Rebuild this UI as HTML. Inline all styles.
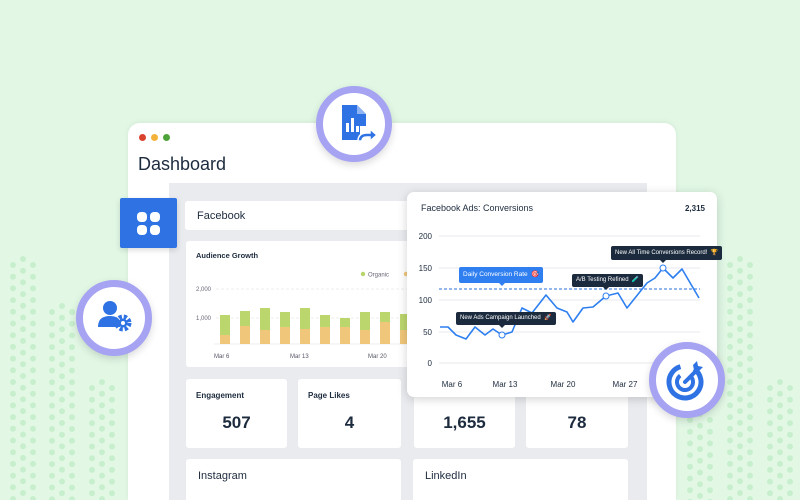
<!DOCTYPE html>
<html style="width:800px;height:500px;overflow:hidden"><head><meta charset="utf-8"><style>
*{margin:0;padding:0;box-sizing:border-box}
body{width:800px;height:500px;overflow:hidden;background:#e2f8e5;font-family:"Liberation Sans",sans-serif;position:relative;color:#1d2b3e}
.abs{position:absolute}
.card{position:absolute;background:#fff;border-radius:3px}
.t{font-weight:bold;font-size:9px;color:#1d2b3e}
.num{position:absolute;width:100%;text-align:center;font-weight:bold;font-size:17px;color:#1d2b3e}
.circ{position:absolute;width:76px;height:76px;border-radius:50%;background:#fff;border:7px solid #a6a4f2;box-shadow:0 3px 8px rgba(0,0,0,.15)}
.tip{position:absolute;background:#1b2a3d;color:#fff;font-size:6px;border-radius:2px;padding:0 4px;white-space:nowrap}
</style></head><body>
<svg id="dots" class="abs" style="left:0;top:0" width="800" height="500"></svg>

<div class="abs" style="left:128px;top:123px;width:548px;height:377px;background:#fff;border-radius:12px 12px 0 0;box-shadow:0 -1px 6px rgba(0,0,0,.06)"></div>
<div class="abs" style="left:139px;top:134px;width:7px;height:7px;border-radius:50%;background:#d9432e"></div>
<div class="abs" style="left:151px;top:134px;width:7px;height:7px;border-radius:50%;background:#f3b33a"></div>
<div class="abs" style="left:163px;top:134px;width:7px;height:7px;border-radius:50%;background:#4ea33a"></div>
<div class="abs" style="left:138px;top:154px;font-size:18px;color:#1d2b3e">Dashboard</div>
<div class="abs" style="left:169px;top:183px;width:478px;height:317px;background:#e9ebef"></div>

<div class="abs" style="left:120px;top:198px;width:57px;height:50px;background:#2e72e3;border-radius:2px;box-shadow:0 2px 6px rgba(0,0,0,.15)">
 <svg width="57" height="50"><g fill="#fff"><rect x="17" y="14" width="10" height="10" rx="4"/><rect x="30" y="14" width="10" height="10" rx="4"/><rect x="17" y="27" width="10" height="10" rx="4"/><rect x="30" y="27" width="10" height="10" rx="4"/></g></svg>
</div>

<div class="card" style="left:185px;top:201px;width:226px;height:29px"><div class="abs" style="left:12px;top:9px;font-size:11px">Facebook</div></div>
<div class="card" style="left:186px;top:241px;width:224px;height:126px">
 <div class="abs t" style="left:10px;top:10px;font-size:7.5px">Audience Growth</div>
 <svg class="abs" style="left:0;top:0" width="224" height="126">
  <circle cx="177" cy="33" r="2.2" fill="#b7d46a"/><text x="182" y="35.5" font-size="6" fill="#667" font-family="Liberation Sans">Organic</text>
  <circle cx="220" cy="33" r="2.2" fill="#f0c77a"/>
  <text x="10" y="50" font-size="6" fill="#667" font-family="Liberation Sans">2,000</text>
  <text x="10" y="79" font-size="6" fill="#667" font-family="Liberation Sans">1,000</text>
  <line x1="30" y1="48" x2="224" y2="48" stroke="#eee" stroke-dasharray="3 2"/>
  <line x1="30" y1="77" x2="224" y2="77" stroke="#eee" stroke-dasharray="3 2"/>
  <line x1="28" y1="103" x2="224" y2="103" stroke="#eee"/>
  <g id="bars"></g>
  <text x="28" y="117" font-size="6" fill="#556" font-family="Liberation Sans">Mar 6</text>
  <text x="104" y="117" font-size="6" fill="#556" font-family="Liberation Sans">Mar 13</text>
  <text x="182" y="117" font-size="6" fill="#556" font-family="Liberation Sans">Mar 20</text>
 </svg>
</div>

<div class="card" style="left:186px;top:379px;width:101px;height:69px"><div class="abs t" style="left:10px;top:12px;font-size:8px">Engagement</div><div class="num" style="top:34px">507</div></div>
<div class="card" style="left:298px;top:379px;width:103px;height:69px"><div class="abs t" style="left:10px;top:12px;font-size:8px">Page Likes</div><div class="num" style="top:34px">4</div></div>
<div class="card" style="left:414px;top:379px;width:101px;height:69px"><div class="num" style="top:34px">1,655</div></div>
<div class="card" style="left:526px;top:379px;width:102px;height:69px"><div class="num" style="top:34px">78</div></div>
<div class="card" style="left:186px;top:459px;width:215px;height:45px"><div class="abs" style="left:12px;top:11px;font-size:11px">Instagram</div></div>
<div class="card" style="left:413px;top:459px;width:215px;height:45px"><div class="abs" style="left:12px;top:11px;font-size:11px">LinkedIn</div></div>

<div class="abs" style="left:407px;top:192px;width:310px;height:205px;background:#fff;border-radius:7px;box-shadow:0 2px 10px rgba(0,0,0,.18)">
 <div class="abs" style="left:14px;top:11px;font-size:9px;color:#1d2b3e">Facebook Ads: Conversions</div>
 <div class="abs" style="right:12px;top:12px;font-size:8px;font-weight:bold">2,315</div>
</div>
<svg class="abs" style="left:0;top:0" width="800" height="500" font-family="Liberation Sans">
 <g stroke="#e8e9ec" stroke-width="1">
  <line x1="439" y1="236" x2="700" y2="236"/><line x1="439" y1="268" x2="700" y2="268"/><line x1="439" y1="300" x2="700" y2="300"/><line x1="439" y1="332" x2="700" y2="332"/><line x1="439" y1="363" x2="700" y2="363"/>
 </g>
 <g font-size="8" fill="#1d2b3e" text-anchor="end"><text x="432" y="239">200</text><text x="432" y="271">150</text><text x="432" y="303">100</text><text x="432" y="335">50</text><text x="432" y="366">0</text></g>
 <g font-size="8" fill="#1d2b3e" text-anchor="middle"><text x="452" y="387">Mar 6</text><text x="505" y="387">Mar 13</text><text x="563" y="387">Mar 20</text><text x="625" y="387">Mar 27</text></g>
 <line x1="439" y1="289" x2="700" y2="289" stroke="#2a6fd9" stroke-width="1" stroke-dasharray="3 2"/>
 <polyline fill="none" stroke="#2d7ff0" stroke-width="1.6" stroke-linejoin="round" points="440,327 448,327 456,335 466,339 475,327 485,335 493,329 502,335 512,332 522,308 532,313 546,295 557,308 567,312 573,322 583,308 593,307 606,296 618,293 627,308 647,283 655,278 663,268 673,278 682,269 699,298"/>
 <g fill="#fff" stroke="#2d7ff0" stroke-width="1"><circle cx="502" cy="335" r="3"/><circle cx="606" cy="296" r="3"/><circle cx="663" cy="268" r="3"/></g>
 <path d="M499 283 l3 3 l3 -3z" fill="#2f7ff0"/>
 <path d="M499 325 l3 3 l3 -3z" fill="#1b2a3d"/>
 <path d="M603 287 l3 3 l3 -3z" fill="#1b2a3d"/>
 <path d="M660 260 l3 3 l3 -3z" fill="#1b2a3d"/>
</svg>
<div class="tip" style="left:459px;top:267px;height:16px;line-height:16px;background:#2f7ff0;font-size:6.5px">Daily Conversion Rate &nbsp;🎯</div>
<div class="tip" style="left:456px;top:312px;height:13px;line-height:13px">New Ads Campaign Launched &nbsp;🚀</div>
<div class="tip" style="left:572px;top:274px;height:13px;line-height:13px">A/B Testing Refined &nbsp;🧪</div>
<div class="tip" style="left:611px;top:246px;height:14px;line-height:14px">New All Time Conversions Record! &nbsp;🏆</div>

<div class="circ" style="left:316px;top:86px">
 <svg width="62" height="62" viewBox="0 0 62 62"><path d="M19 12 h15 l9 9 v12 h-6 v14 h-18z" fill="#2e72e3"/><path d="M34 12 v9 h9z" fill="#8fb4f2"/><g fill="#fff"><rect x="23" y="30" width="3" height="9"/><rect x="28" y="25" width="3" height="14"/><rect x="33" y="33" width="3" height="6"/></g><path d="M35 48 q0-8 9-8 h3 v-4 l7 6 l-7 6 v-4 h-3 q-5 0-5 4z" fill="#2e72e3" stroke="#fff" stroke-width="1.5"/></svg>
</div>
<div class="circ" style="left:76px;top:280px">
 <svg width="62" height="62" viewBox="0 0 62 62"><circle cx="27" cy="21" r="7" fill="#2e72e3"/><path d="M15 40 q0-11 12-11 q8 0 10 5 v6z" fill="#2e72e3"/><circle cx="40" cy="36" r="6" fill="none" stroke="#2e72e3" stroke-width="5" stroke-dasharray="3 1.8"/><circle cx="40" cy="36" r="4.5" fill="#2e72e3"/><circle cx="40" cy="36" r="2" fill="#fff"/></svg>
</div>
<div class="circ" style="left:649px;top:342px">
 <svg width="62" height="62" viewBox="0 0 62 62"><circle cx="29" cy="33" r="16" fill="none" stroke="#2e72e3" stroke-width="5" stroke-dasharray="86 15" transform="rotate(-55 29 33)"/><circle cx="29" cy="33" r="8" fill="none" stroke="#2e72e3" stroke-width="4" stroke-dasharray="40 10" transform="rotate(-55 29 33)"/><line x1="29" y1="33" x2="40" y2="22" stroke="#2e72e3" stroke-width="4" stroke-linecap="round"/><path d="M37 16 l4 -4 l1 5 l5 1 l-4 4 l-5 -1z" fill="#2e72e3"/></svg>
</div>

<script>
var s=document.getElementById('dots'),h='';
function grp(x0,y0,y1){for(var c=0;c<3;c++){var x=x0+c*10,off=(c==1)?-6:0;for(var y=y0+off;y<y1;y+=11.7)h+='<circle cx="'+x+'" cy="'+y.toFixed(1)+'" r="3" fill="#c8efcd"/>';}}
grp(13,265,505);grp(52,312,505);grp(92,388,505);grp(730,265,505);grp(770,388,505);grp(690,420,505);
s.innerHTML=h;
var b=document.getElementById('bars'),g='';
var tops=[315,311,308,312,308,315,318,312,312,314],or=[335,326,330,327,329,327,327,330,322,330];
for(var i=0;i<10;i++){var x=34+i*20;g+='<rect x="'+x+'" y="'+(tops[i]-241)+'" width="10" height="'+(or[i]-tops[i])+'" fill="#bcd66e"/><rect x="'+x+'" y="'+(or[i]-241)+'" width="10" height="'+(344-or[i])+'" fill="#f0c77a"/>';}
b.innerHTML=g;
</script>
</body></html>
